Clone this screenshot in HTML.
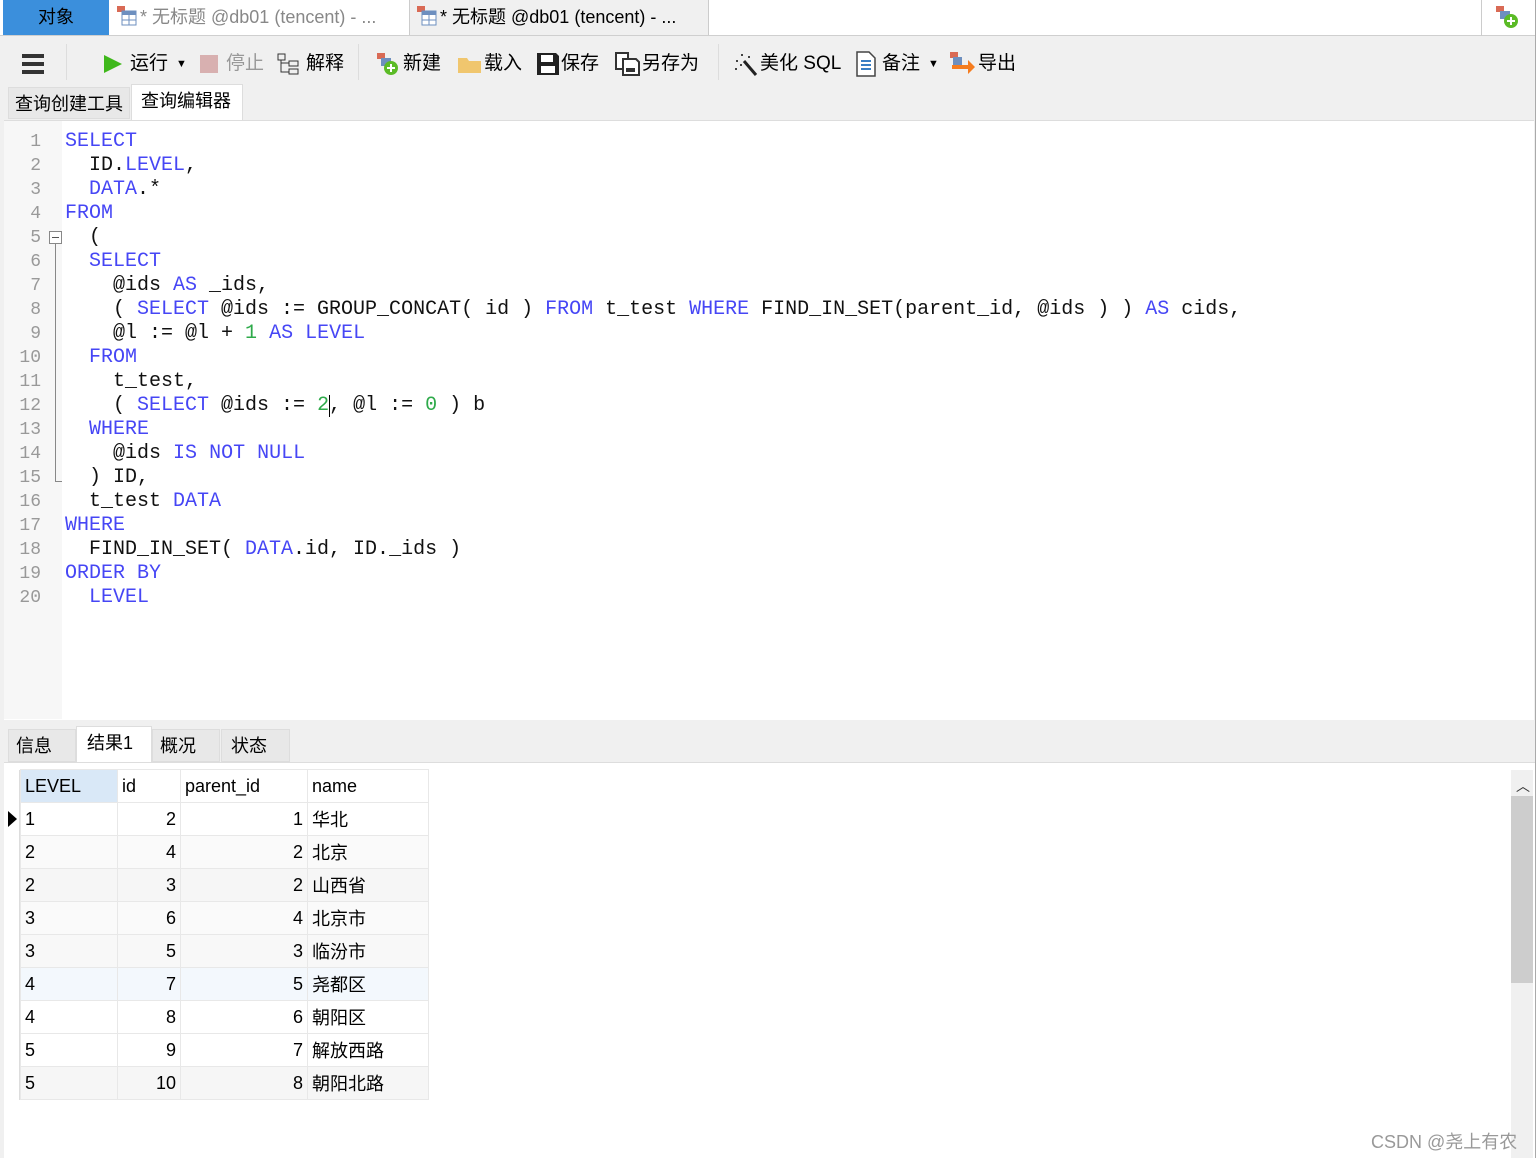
<!DOCTYPE html>
<html><head><meta charset="utf-8"><style>
*{margin:0;padding:0;box-sizing:border-box}
body{width:1538px;height:1158px;background:#f0f0f0;font-family:"Liberation Sans","Noto Sans CJK SC",sans-serif;position:relative;overflow:hidden;color:#000}
.abs{position:absolute}
.tab{position:absolute;top:0;height:35px;font-size:18px;line-height:34px;white-space:nowrap}
.tb{position:absolute;top:49px;font-size:19px;line-height:30px;white-space:nowrap;display:flex;align-items:center}
.code{position:absolute;left:65px;top:130px;font-family:"Liberation Mono",monospace;font-size:20px;line-height:24px;white-space:pre;color:#111}
.ln{position:absolute;left:0;width:41px;top:130px;font-family:"Liberation Mono",monospace;font-size:18px;line-height:24px;text-align:right;color:#999;white-space:pre}
.k{color:#4646f5}.n{color:#2eaa4a}
table{border-collapse:collapse;font-size:18px}
td{height:33px;border:1px solid #e8e8e8;padding:0 4px;white-space:nowrap}
</style></head><body>
<div class="abs" style="left:0;top:0;width:1538px;height:36px;background:#fff;border-bottom:1px solid #cfcfcf"></div>
<div class="tab" style="left:3px;width:106px;background:#3b8fdc;text-align:center;color:#000">对象</div>
<div class="tab" style="left:110px;width:298px;background:#fff;color:#888;padding-left:6px">
<svg width="24" height="22" style="vertical-align:-4px"><rect x="1" y="1" width="8" height="6" fill="#d96a55"/><rect x="6" y="6" width="14" height="14" fill="#fff" stroke="#6d8fbf"/><rect x="6" y="6" width="14" height="4" fill="#6d8fbf"/><path d="M13 10v10M6 15h14" stroke="#6d8fbf"/></svg>* 无标题 @db01 (tencent) - ...</div>
<div class="tab" style="left:409px;width:300px;background:#f0f0f0;color:#000;padding-left:6px;border-left:1px solid #ccc;border-right:1px solid #ccc">
<svg width="24" height="22" style="vertical-align:-4px"><rect x="1" y="1" width="8" height="6" fill="#d96a55"/><rect x="6" y="6" width="14" height="14" fill="#fff" stroke="#6d8fbf"/><rect x="6" y="6" width="14" height="4" fill="#6d8fbf"/><path d="M13 10v10M6 15h14" stroke="#6d8fbf"/></svg>* 无标题 @db01 (tencent) - ...</div>
<div class="abs" style="left:1481px;top:0;width:1px;height:36px;background:#ccc"></div>
<svg class="abs" style="left:1494px;top:4px" width="28" height="28"><rect x="2" y="2" width="8" height="6" fill="#d96a55"/><rect x="6" y="7" width="10" height="8" fill="#6d8fbf"/><circle cx="17" cy="17" r="7" fill="#5bbb26"/><path d="M17 13v8M13 17h8" stroke="#fff" stroke-width="2"/></svg>
<div class="abs" style="left:1535px;top:0;width:3px;height:1158px;background:#fff;border-left:1px solid #aaa"></div>
<div class="abs" style="left:22px;top:54px;width:22px;height:4px;background:#333;box-shadow:0 8px 0 #333,0 16px 0 #333"></div>
<div class="abs" style="left:66px;top:44px;width:1px;height:36px;background:#ddd"></div>
<div class="tb" style="left:102px"><svg width="22" height="22"><path d="M2 2L20 11L2 20Z" fill="#3fb81b"/></svg><span style="margin-left:6px">运行</span><span style="font-size:11px;margin-left:8px">▼</span></div>
<div class="tb" style="left:200px;color:#999"><span style="display:inline-block;width:18px;height:18px;background:#d8b0b0;margin-right:8px"></span>停止</div>
<div class="tb" style="left:276px"><svg width="26" height="24"><rect x="2" y="2" width="7" height="6" fill="none" stroke="#333"/><rect x="13" y="9" width="9" height="5" fill="none" stroke="#333"/><rect x="13" y="17" width="9" height="5" fill="none" stroke="#333"/><path d="M5 8v12h8M5 11h8" stroke="#333" fill="none"/></svg><span style="margin-left:4px">解释</span></div>
<div class="abs" style="left:358px;top:44px;width:1px;height:36px;background:#ddd"></div>
<div class="tb" style="left:375px"><svg width="28" height="26"><rect x="2" y="2" width="8" height="6" fill="#d96a55"/><rect x="6" y="7" width="10" height="8" fill="#6d8fbf"/><circle cx="16" cy="17" r="7" fill="#5bbb26"/><path d="M16 13v8M12 17h8" stroke="#fff" stroke-width="2"/></svg>新建</div>
<div class="tb" style="left:456px"><svg width="28" height="24"><path d="M2 6h9l2 3h12v12H2z" fill="#f0c66e"/></svg>载入</div>
<div class="tb" style="left:535px"><svg width="26" height="26"><path d="M2 2h19l3 3v19H2z" fill="#222"/><rect x="6" y="4" width="12" height="7" fill="#fff"/><rect x="6" y="15" width="14" height="7" fill="#fff"/></svg>保存</div>
<div class="tb" style="left:614px"><svg width="28" height="26"><rect x="2" y="2" width="12" height="16" fill="#fff" stroke="#333" stroke-width="2"/><path d="M9 8h13l3 3v13H9z" fill="#fff" stroke="#333" stroke-width="2"/><rect x="12" y="17" width="9" height="4" fill="#333"/></svg>另存为</div>
<div class="abs" style="left:718px;top:44px;width:1px;height:36px;background:#ddd"></div>
<div class="tb" style="left:732px"><svg width="28" height="26"><path d="M12 10L24 24" stroke="#222" stroke-width="3"/><path d="M4 10h2M10 3v2M16 6h2M3 18h2M8 14h2" stroke="#444" stroke-width="2"/></svg>美化 SQL</div>
<div class="tb" style="left:854px"><svg width="24" height="26"><path d="M3 1h12l6 6v18H3z" fill="#fff" stroke="#444" stroke-width="1.5"/><path d="M7 10h10M7 14h10M7 18h10" stroke="#3a7fc4" stroke-width="2"/></svg><span style="margin-left:4px">备注</span><span style="font-size:11px;margin-left:8px">▼</span></div>
<div class="tb" style="left:948px"><svg width="30" height="26"><rect x="2" y="1" width="8" height="6" fill="#d96a55"/><rect x="5" y="6" width="9" height="8" fill="#6d8fbf"/><path d="M4 18h16v-5l7 7-7 7v-5H4z" fill="#f57c1f" transform="translate(0,-4)"/></svg>导出</div>
<div class="abs" style="left:8px;top:87px;width:122px;height:32px;background:#e8e8e8;border:1px solid #ddd;font-size:18px;line-height:32px;padding-left:6px">查询创建工具</div>
<div class="abs" style="left:131px;top:84px;width:112px;height:36px;background:#fff;border:1px solid #ddd;border-bottom:none;font-size:18px;line-height:32px;padding-left:9px">查询编辑器</div>
<div class="abs" style="left:4px;top:120px;width:1530px;height:600px;background:#fff;border-top:1px solid #ddd"></div>
<div class="abs" style="left:4px;top:121px;width:58px;height:598px;background:#f7f7f7"></div>
<div class="ln">1
2
3
4
5
6
7
8
9
10
11
12
13
14
15
16
17
18
19
20</div>
<div class="abs" style="left:49px;top:231px;width:13px;height:13px;border:1px solid #888;background:#fff"></div>
<div class="abs" style="left:52px;top:237px;width:7px;height:1px;background:#555"></div>
<div class="abs" style="left:55px;top:244px;width:1px;height:238px;background:#888"></div>
<div class="abs" style="left:55px;top:481px;width:7px;height:1px;background:#888"></div>
<div class="code"><span class="k">SELECT</span>
  ID.<span class="k">LEVEL</span>,
  <span class="k">DATA</span>.*
<span class="k">FROM</span>
  (
  <span class="k">SELECT</span>
    @ids <span class="k">AS</span> _ids,
    ( <span class="k">SELECT</span> @ids := GROUP_CONCAT( id ) <span class="k">FROM</span> t_test <span class="k">WHERE</span> FIND_IN_SET(parent_id, @ids ) ) <span class="k">AS</span> cids,
    @l := @l + <span class="n">1</span> <span class="k">AS</span> <span class="k">LEVEL</span>
  <span class="k">FROM</span>
    t_test,
    ( <span class="k">SELECT</span> @ids := <span class="n">2</span>, @l := <span class="n">0</span> ) b
  <span class="k">WHERE</span>
    @ids <span class="k">IS</span> <span class="k">NOT</span> <span class="k">NULL</span>
  ) ID,
  t_test <span class="k">DATA</span>
<span class="k">WHERE</span>
  FIND_IN_SET( <span class="k">DATA</span>.id, ID._ids )
<span class="k">ORDER</span> <span class="k">BY</span>
  <span class="k">LEVEL</span></div>
<div class="abs" style="left:329px;top:395px;width:1px;height:22px;background:#000"></div>
<div class="abs" style="left:0;top:720px;width:1535px;height:8px;background:#f0f0f0"></div>
<div class="abs" style="left:8px;top:729px;width:68px;height:33px;background:#e8e8e8;border:1px solid #ddd;font-size:18px;line-height:32px;padding-left:7px">信息</div>
<div class="abs" style="left:76px;top:726px;width:76px;height:37px;background:#fff;border:1px solid #ddd;border-bottom:none;font-size:18px;line-height:32px;padding-left:10px">结果1</div>
<div class="abs" style="left:152px;top:729px;width:68px;height:33px;background:#e8e8e8;border:1px solid #ddd;font-size:18px;line-height:32px;padding-left:7px">概况</div>
<div class="abs" style="left:221px;top:729px;width:69px;height:33px;background:#e8e8e8;border:1px solid #ddd;font-size:18px;line-height:32px;padding-left:9px">状态</div>
<div class="abs" style="left:4px;top:762px;width:1531px;height:396px;background:#fff;border-top:1px solid #ddd"></div>
<div class="abs" style="left:4px;top:770px;width:16px;height:330px;background:#fff;border-right:1px solid #ddd"></div>
<div class="abs" style="left:8px;top:811px;width:0;height:0;border-top:8px solid transparent;border-bottom:8px solid transparent;border-left:9px solid #000"></div>
<table class="abs" style="left:20px;top:769px;table-layout:fixed;width:408px">
<colgroup><col style="width:97px"><col style="width:63px"><col style="width:127px"><col style="width:121px"></colgroup>
<tr style="background:#fff"><td style="background:#d9e8f7">LEVEL</td><td>id</td><td>parent_id</td><td>name</td></tr>
<tr><td>1</td><td align="right">2</td><td align="right">1</td><td>华北</td></tr>
<tr style="background:#fafafa"><td>2</td><td align="right">4</td><td align="right">2</td><td>北京</td></tr>
<tr style="background:#f6f6f6"><td>2</td><td align="right">3</td><td align="right">2</td><td>山西省</td></tr>
<tr style="background:#fafafa"><td>3</td><td align="right">6</td><td align="right">4</td><td>北京市</td></tr>
<tr style="background:#f8f8f8"><td>3</td><td align="right">5</td><td align="right">3</td><td>临汾市</td></tr>
<tr style="background:#f3f8fd"><td>4</td><td align="right">7</td><td align="right">5</td><td>尧都区</td></tr>
<tr><td>4</td><td align="right">8</td><td align="right">6</td><td>朝阳区</td></tr>
<tr><td>5</td><td align="right">9</td><td align="right">7</td><td>解放西路</td></tr>
<tr style="background:#f6f6f6"><td>5</td><td align="right">10</td><td align="right">8</td><td>朝阳北路</td></tr>
</table>
<div class="abs" style="left:1511px;top:770px;width:22px;height:388px;background:#f0f0f0"></div>
<div class="abs" style="left:1511px;top:796px;width:22px;height:187px;background:#cdcdcd"></div>
<div class="abs" style="left:1516px;top:776px;font-size:14px;color:#333">︿</div>
<div class="abs" style="left:1371px;top:1128px;font-size:18px;color:#999;white-space:nowrap">CSDN @尧上有农</div>
</body></html>
